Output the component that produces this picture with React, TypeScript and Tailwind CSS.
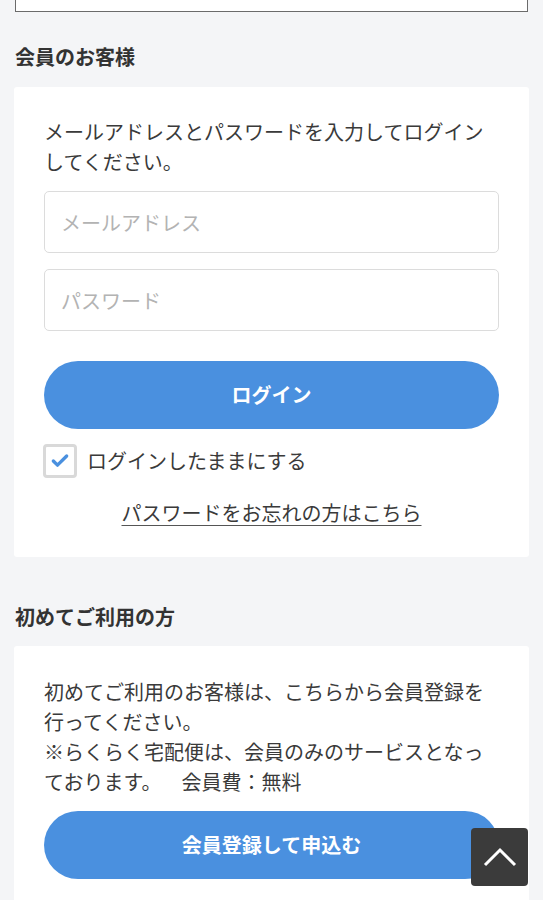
import { Check } from 'lucide-react';

const font = { fontFamily: '"Noto Sans CJK JP", "Noto Sans", sans-serif' };

export default function App() {
  return (
    <div className="min-h-screen bg-[#f4f5f7] px-[14px] text-[20px] leading-[30px] text-[#3a3a3a]" style={font}>
      {/* cut-off field above */}
      <div className="mx-px h-[12px] border-x-[1.5px] border-b-[1.5px] border-[#6b6b6b] bg-white"></div>

      {/* Members */}
      <h2 className="mt-[30px] mb-[15px] pl-px font-bold text-[#333]">会員のお客様</h2>
      <div className="rounded-[3px] bg-white px-[30px] pt-[30px] pb-[29px]">
        <p>メールアドレスとパスワードを入力してログインしてください。</p>
        <input
          type="email"
          placeholder="メールアドレス"
          className="mt-[14px] block h-[62px] w-full rounded-[5px] border-[1.5px] border-[#dcdcdc] bg-white px-[16px] placeholder:text-[#b3b3b3] outline-none"
        />
        <input
          type="password"
          placeholder="パスワード"
          className="mt-[16px] block h-[62px] w-full rounded-[5px] border-[1.5px] border-[#dcdcdc] bg-white px-[16px] placeholder:text-[#b3b3b3] outline-none"
        />
        <button className="mt-[30px] flex h-[68px] w-full items-center justify-center rounded-full bg-[#4a90df] font-bold text-white">
          ログイン
        </button>
        <label className="mt-[15px] flex items-center">
          <span className="-ml-px flex h-[34px] w-[34px] items-center justify-center rounded-[4px] border-[3px] border-[#d9d9d9] bg-white">
            <Check className="h-[20px] w-[20px] text-[#4a90df]" strokeWidth={4} />
          </span>
          <span className="ml-[10px]">ログインしたままにする</span>
        </label>
        <div className="mt-[20px] text-center">
          <a href="#" className="underline decoration-1 underline-offset-[4px] decoration-[#555]">パスワードをお忘れの方はこちら</a>
        </div>
      </div>

      {/* First time */}
      <h2 className="mt-[45px] mb-[14px] pl-px font-bold text-[#333]">初めてご利用の方</h2>
      <div className="rounded-[3px] bg-white px-[30px] pt-[31px] pb-[30px]">
        <p>初めてご利用のお客様は、こちらから会員登録を行ってください。</p>
        <p>
          ※らくらく宅配便は、会員のみのサービスとなっております。
          <span className="ml-[20px]">会員費：無料</span>
        </p>
        <button className="mt-[14px] flex h-[68px] w-full items-center justify-center rounded-full bg-[#4a90df] font-bold text-white">
          会員登録して申込む
        </button>
      </div>

      {/* back to top */}
      <button className="fixed right-[15px] bottom-[14px] flex h-[58px] w-[57px] items-center justify-center rounded-[4px] bg-[#3b3b3b]">
        <svg width="34" height="20" viewBox="0 0 34 20" fill="none" stroke="white" strokeWidth="3">
          <path d="M2 18 L17 3 L32 18" />
        </svg>
      </button>
    </div>
  );
}
